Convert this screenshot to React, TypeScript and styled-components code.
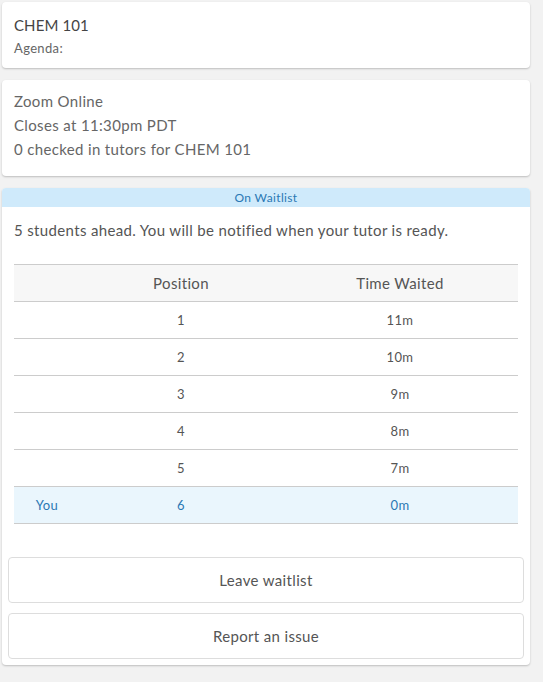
import React from "react";
import styled, { createGlobalStyle } from "styled-components";

const Global = createGlobalStyle`
  html, body { margin: 0; padding: 0; background: #f2f2f2; }
  body { font-family: "Lato", "Open Sans", sans-serif; color: #555; letter-spacing: 0.35px; }
  * { box-sizing: border-box; }
`;

const Page = styled.div`
  display: flex;
  flex-direction: column;
  gap: 12px;
  padding: 2px 13px 18px 2px;
`;

const Card = styled.section`
  background: #fff;
  border-radius: 4px;
  box-shadow: 0 1px 2px rgba(0, 0, 0, 0.22);
  overflow: hidden;
`;

const InfoBody = styled.div<{ $pad: string }>`
  padding: ${(p) => p.$pad};
`;

const Title = styled.div`
  font-size: 15px;
  line-height: 20px;
  color: #444;
  letter-spacing: 0.1px;
`;

const Sub = styled.div`
  font-size: 13px;
  line-height: 18px;
  margin-top: 4px;
  color: #666;
`;

const Line = styled.div`
  font-size: 15px;
  line-height: 24px;
  color: #666;
`;

const StatusBar = styled.div`
  background: #cfeafb;
  color: #2a78b4;
  font-size: 12px;
  line-height: 19px;
  text-align: center;
`;

const Message = styled.p`
  margin: 0;
  padding: 13px 12px 0 12px;
  font-size: 15px;
  line-height: 20px;
  color: #555;
`;

const Table = styled.table`
  margin: 24px 12px 0 12px;
  width: calc(100% - 24px);
  border-collapse: collapse;
`;

const Th = styled.th<{ $w: number }>`
  width: ${(p) => p.$w}px;
  background: #f7f7f7;
  border-top: 1px solid #ccc;
  border-bottom: 1px solid #ccc;
  height: 37px;
  font-weight: normal;
  font-size: 15px;
  color: #555;
  text-align: center;
`;

const Tr = styled.tr<{ $me?: boolean }>`
  background: ${(p) => (p.$me ? "#eaf6fd" : "#fff")};
  color: ${(p) => (p.$me ? "#2a78b4" : "#555")};
`;

const Td = styled.td`
  height: 37px;
  border-bottom: 1px solid #ccc;
  font-size: 13px;
  text-align: center;
`;

const Actions = styled.div`
  display: flex;
  flex-direction: column;
  gap: 10px;
  padding: 33px 6px 6px 6px;
`;

const Button = styled.button`
  height: 46px;
  background: #fff;
  border: 1px solid #ddd;
  border-radius: 4px;
  font-family: inherit;
  letter-spacing: inherit;
  font-size: 15px;
  color: #555;
  cursor: pointer;
`;

const rows = [
  { who: "", pos: 1, t: "11m" },
  { who: "", pos: 2, t: "10m" },
  { who: "", pos: 3, t: "9m" },
  { who: "", pos: 4, t: "8m" },
  { who: "", pos: 5, t: "7m" },
  { who: "You", pos: 6, t: "0m", me: true },
];

export default function App() {
  return (
    <>
      <Global />
      <Page>
        <Card>
          <InfoBody $pad="13px 12px 11px 12px">
            <Title>CHEM 101</Title>
            <Sub>Agenda:</Sub>
          </InfoBody>
        </Card>
        <Card>
          <InfoBody $pad="9px 12px 15px 12px">
            <Line>Zoom Online</Line>
            <Line>Closes at 11:30pm PDT</Line>
            <Line>0 checked in tutors for CHEM 101</Line>
          </InfoBody>
        </Card>
        <Card>
          <StatusBar>On Waitlist</StatusBar>
          <Message>5 students ahead. You will be notified when your tutor is ready.</Message>
          <Table>
            <thead>
              <tr>
                <Th $w={66}></Th>
                <Th $w={202}>Position</Th>
                <Th $w={236}>Time Waited</Th>
              </tr>
            </thead>
            <tbody>
              {rows.map((r) => (
                <Tr key={r.pos} $me={r.me}>
                  <Td>{r.who}</Td>
                  <Td>{r.pos}</Td>
                  <Td>{r.t}</Td>
                </Tr>
              ))}
            </tbody>
          </Table>
          <Actions>
            <Button>Leave waitlist</Button>
            <Button>Report an issue</Button>
          </Actions>
        </Card>
      </Page>
    </>
  );
}
